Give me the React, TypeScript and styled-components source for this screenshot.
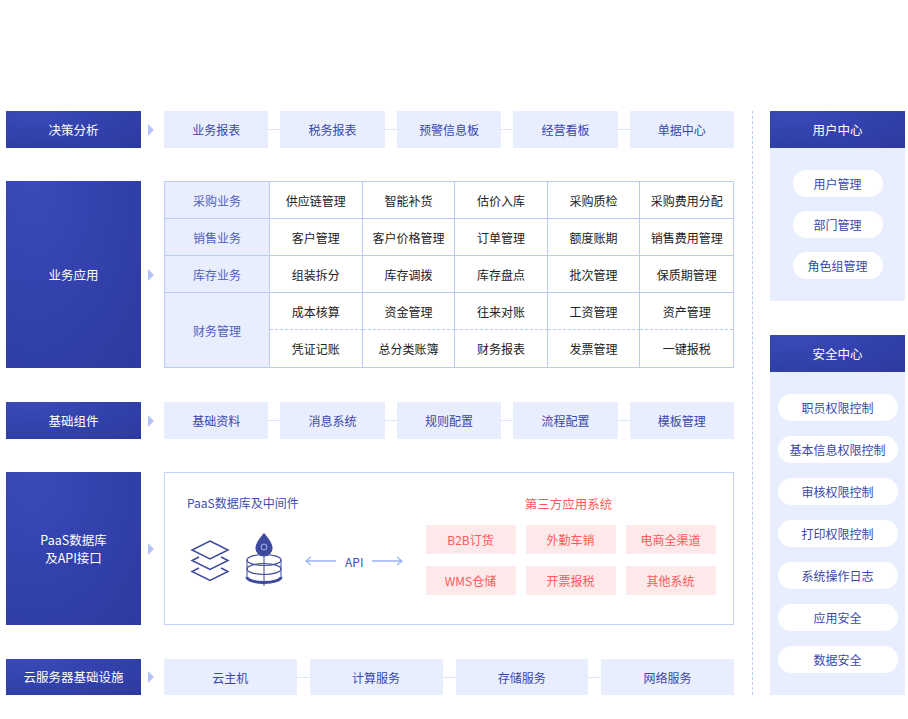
import React from "react";
import styled, { createGlobalStyle } from "styled-components";

const Global = createGlobalStyle`
  html, body { margin: 0; padding: 0; background: #fff; }
  body { font-family: "Noto Sans CJK SC", "Noto Sans", sans-serif; font-size: 12px; }
`;

const Page = styled.div`
  display: flex;
  padding: 111px 0 0 6px;
  width: 908px;
  box-sizing: border-box;
`;
const Main = styled.div`
  width: 728px;
  flex: none;
  display: flex;
  flex-direction: column;
`;
const Row = styled.div<{ h: number; mt?: number }>`
  display: flex;
  height: ${(p) => p.h}px;
  margin-top: ${(p) => p.mt ?? 0}px;
`;
const Label = styled.div`
  width: 135px;
  flex: none;
  background: radial-gradient(ellipse at 20% 0%, #3a4ab8 0%, #3342ad 45%, #2d3aa0 100%);
  color: #fff;
  font-size: 12.5px;
  display: flex;
  align-items: center;
  justify-content: center;
  text-align: center;
  line-height: 18px;
`;
const ArrowCell = styled.div`
  width: 23px;
  flex: none;
  display: flex;
  align-items: center;
  justify-content: center;
  &::after {
    content: "";
    border-left: 6px solid #b4c6f6;
    border-top: 6px solid transparent;
    border-bottom: 6px solid transparent;
    margin-right: 4px;
  }
`;
const Chain = styled.div`
  flex: 1;
  min-width: 0;
  display: flex;
  align-items: center;
`;
const Chip = styled.div`
  flex: 1;
  height: 100%;
  background: #e8eefd;
  color: #3a47ad;
  display: flex;
  align-items: center;
  justify-content: center;
`;
const Link = styled.div<{ w: number }>`
  width: ${(p) => p.w}px;
  flex: none;
  height: 1px;
  background: #dde5fb;
`;
const Table = styled.div`
  flex: 1;
  min-width: 0;
  display: grid;
  grid-template-columns: 105px repeat(5, 1fr);
  grid-template-rows: repeat(5, 1fr);
  border: 1px solid #b9cbf6;
  box-sizing: border-box;
`;
const Cat = styled.div<{ span?: number; last?: boolean }>`
  grid-row: span ${(p) => p.span ?? 1};
  background: #e8eefd;
  color: #5260c0;
  display: flex;
  align-items: center;
  justify-content: center;
  border-right: 1px solid #b9cbf6;
  border-bottom: ${(p) => (p.last ? "none" : "1px solid #b9cbf6")};
`;
const Cell = styled.div<{ bottom: "solid" | "dashed" | "none"; lastCol?: boolean }>`
  color: #222;
  display: flex;
  align-items: center;
  justify-content: center;
  border-right: ${(p) => (p.lastCol ? "none" : "1px solid #b9cbf6")};
  border-bottom: ${(p) => (p.bottom === "none" ? "none" : `1px ${p.bottom} #b9cbf6`)};
`;
const PaasBox = styled.div`
  flex: 1;
  min-width: 0;
  border: 1px solid #c3d2f7;
  box-sizing: border-box;
  display: flex;
  padding: 21px 0 0 22px;
`;
const PaasLeft = styled.div`
  width: 238px;
  flex: none;
  display: flex;
  flex-direction: column;
`;
const PaasTitle = styled.div`
  color: #3e4cb2;
  font-size: 12px;
`;
const IconRow = styled.div`
  display: flex;
  align-items: center;
  gap: 12px;
  margin-top: 22px;
  margin-left: 2px;
`;
const ApiWrap = styled.div`
  display: flex;
  align-items: center;
  gap: 8px;
  color: #3e4cb2;
  margin-left: 8px;
`;
const ThirdParty = styled.div`
  width: 291px;
  flex: none;
  display: flex;
  flex-direction: column;
  align-items: center;
`;
const RedTitle = styled.div`
  color: #ff5a5a;
  font-size: 12.5px;
  margin-bottom: 12px;
  margin-right: 4px;
`;
const RedGrid = styled.div`
  display: grid;
  grid-template-columns: repeat(3, 90px);
  grid-auto-rows: 29px;
  column-gap: 10px;
  row-gap: 12px;
`;
const RedChip = styled.div`
  background: #fde9ea;
  color: #ff5a5a;
  display: flex;
  align-items: center;
  justify-content: center;
`;
const Divider = styled.div`
  width: 36px;
  flex: none;
  display: flex;
  justify-content: center;
  &::after {
    content: "";
    width: 0;
    height: 584px;
    border-left: 1px dashed #b9cbf6;
  }
`;
const Side = styled.div`
  width: 135px;
  display: flex;
  flex-direction: column;
`;
const Panel = styled.div<{ h: number; mt?: number }>`
  height: ${(p) => p.h}px;
  margin-top: ${(p) => p.mt ?? 0}px;
  background: #e8eefd;
  display: flex;
  flex-direction: column;
`;
const PanelHead = styled(Label)`
  width: auto;
  height: 37px;
  flex: none;
`;
const Pills = styled.div<{ pt: number; gap: number }>`
  display: flex;
  flex-direction: column;
  align-items: center;
  padding-top: ${(p) => p.pt}px;
  gap: ${(p) => p.gap}px;
`;
const Pill = styled.div<{ w: number }>`
  width: ${(p) => p.w}px;
  height: 27px;
  border-radius: 14px;
  background: #fff;
  color: #3a47ad;
  display: flex;
  align-items: center;
  justify-content: center;
`;

const ChainRow = ({ items, gap }: { items: string[]; gap: number }) => (
  <Chain>
    {items.map((t, i) => (
      <React.Fragment key={t}>
        {i > 0 && <Link w={gap} />}
        <Chip>{t}</Chip>
      </React.Fragment>
    ))}
  </Chain>
);

const LayersIcon = () => (
  <svg width="42" height="46" viewBox="0 0 42 46" fill="none" stroke="#3e4a9e" strokeWidth="1.5">
    <path d="M21 3 L39 12 L21 21 L3 12 Z" />
    <path d="M10 19 L3 22.5 L21 31.5 L39 22.5 L32 19" />
    <path d="M10 30 L3 33.5 L21 42.5 L39 33.5 L32 30" />
  </svg>
);
const DbIcon = () => (
  <svg width="42" height="56" viewBox="0 0 42 56" fill="none" stroke="#3e4a9e" strokeWidth="1.2">
    <ellipse cx="21" cy="27" rx="17" ry="5.5" />
    <ellipse cx="21" cy="36" rx="17" ry="5.5" />
    <path d="M4 44 a17 5.5 0 0 0 34 0" strokeWidth="3" />
    <path d="M4 27 V44 M38 27 V44" strokeWidth="1" />
    <path d="M21 16 V53" strokeWidth="1" />
    <path d="M21 1 C15 8 13 12 13 15 a8 8 0 0 0 16 0 C29 12 27 8 21 1 Z" fill="#3e4a9e" />
    <circle cx="21" cy="14" r="3" stroke="#c7d2ff" strokeWidth="0.8" />
  </svg>
);
const Arrow = ({ left }: { left?: boolean }) => (
  <svg width="32" height="10" viewBox="0 0 32 10" fill="none" stroke="#9db4f2" strokeWidth="1.3">
    {left ? <path d="M1 5 H31 M6 1 L1 5 L6 9" /> : <path d="M1 5 H31 M26 1 L31 5 L26 9" />}
  </svg>
);

const table: string[][] = [
  ["供应链管理", "智能补货", "估价入库", "采购质检", "采购费用分配"],
  ["客户管理", "客户价格管理", "订单管理", "额度账期", "销售费用管理"],
  ["组装拆分", "库存调拨", "库存盘点", "批次管理", "保质期管理"],
  ["成本核算", "资金管理", "往来对账", "工资管理", "资产管理"],
  ["凭证记账", "总分类账簿", "财务报表", "发票管理", "一键报税"],
];
const cats: [string, number][] = [["采购业务", 1], ["销售业务", 1], ["库存业务", 1], ["财务管理", 2]];

export default function App() {
  const cells: React.ReactNode[] = [];
  let r = 0;
  cats.forEach(([c, span], ci) => {
    for (let k = 0; k < span; k++) {
      if (k === 0) cells.push(<Cat key={c} span={span} last={ci === cats.length - 1}>{c}</Cat>);
      table[r].forEach((t, j) =>
        cells.push(
          <Cell key={t} lastCol={j === 4} bottom={r === 4 ? "none" : r === 3 ? "dashed" : "solid"}>
            {t}
          </Cell>
        )
      );
      r++;
    }
  });
  return (
    <>
      <Global />
      <Page>
        <Main>
          <Row h={37}>
            <Label>决策分析</Label>
            <ArrowCell />
            <ChainRow gap={12} items={["业务报表", "税务报表", "预警信息板", "经营看板", "单据中心"]} />
          </Row>
          <Row h={187} mt={33}>
            <Label>业务应用</Label>
            <ArrowCell />
            <Table>{cells}</Table>
          </Row>
          <Row h={37} mt={34}>
            <Label>基础组件</Label>
            <ArrowCell />
            <ChainRow gap={12} items={["基础资料", "消息系统", "规则配置", "流程配置", "模板管理"]} />
          </Row>
          <Row h={153} mt={33}>
            <Label>PaaS数据库<br />及API接口</Label>
            <ArrowCell />
            <PaasBox>
              <PaasLeft>
                <PaasTitle>PaaS数据库及中间件</PaasTitle>
                <IconRow>
                  <LayersIcon />
                  <DbIcon />
                  <ApiWrap>
                    <Arrow left />
                    <span>API</span>
                    <Arrow />
                  </ApiWrap>
                </IconRow>
              </PaasLeft>
              <ThirdParty>
                <RedTitle>第三方应用系统</RedTitle>
                <RedGrid>
                  {["B2B订货", "外勤车销", "电商全渠道", "WMS仓储", "开票报税", "其他系统"].map((t) => (
                    <RedChip key={t}>{t}</RedChip>
                  ))}
                </RedGrid>
              </ThirdParty>
            </PaasBox>
          </Row>
          <Row h={36} mt={34}>
            <Label>云服务器基础设施</Label>
            <ArrowCell />
            <ChainRow gap={13} items={["云主机", "计算服务", "存储服务", "网络服务"]} />
          </Row>
        </Main>
        <Divider />
        <Side>
          <Panel h={190}>
            <PanelHead>用户中心</PanelHead>
            <Pills pt={22} gap={14}>
              {["用户管理", "部门管理", "角色组管理"].map((t) => (
                <Pill w={90} key={t}>{t}</Pill>
              ))}
            </Pills>
          </Panel>
          <Panel h={360} mt={34}>
            <PanelHead>安全中心</PanelHead>
            <Pills pt={22} gap={15}>
              {["职员权限控制", "基本信息权限控制", "审核权限控制", "打印权限控制", "系统操作日志", "应用安全", "数据安全"].map((t) => (
                <Pill w={120} key={t}>{t}</Pill>
              ))}
            </Pills>
          </Panel>
        </Side>
      </Page>
    </>
  );
}
